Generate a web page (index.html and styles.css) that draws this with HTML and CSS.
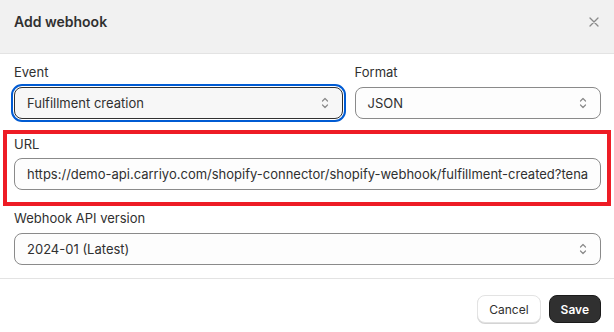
FILE: index.html
```html
<!DOCTYPE html>
<html lang="en">
<head>
    <meta charset="UTF-8">
    <meta name="viewport" content="width=device-width, initial-scale=1.0">
    <title>Add webhook</title>
    <link rel="stylesheet" href="styles.css">
</head>
<body>
    <div class="modal">
        <div class="modal-header">
            <span class="modal-title">Add webhook</span>
            <button class="close-button" aria-label="Close">
                <svg width="10" height="10" viewBox="0 0 10 10"><path d="M1 1L9 9M9 1L1 9" stroke="#8a8a8a" stroke-width="1.3" stroke-linecap="round"/></svg>
            </button>
        </div>

        <div class="modal-body">
            <div class="field-row">
                <div class="field event">
                    <label class="field-label">Event</label>
                    <div class="select focused">
                        <span>Fulfillment creation</span>
                        <svg class="chevron" width="10" height="14" viewBox="0 0 10 14"><path d="M2.5 5L5 2.5L7.5 5M2.5 9L5 11.5L7.5 9" fill="none" stroke="#8a8a8a" stroke-width="1.2" stroke-linecap="round" stroke-linejoin="round"/></svg>
                    </div>
                </div>
                <div class="field format">
                    <label class="field-label">Format</label>
                    <div class="select">
                        <span>JSON</span>
                        <svg class="chevron" width="10" height="14" viewBox="0 0 10 14"><path d="M2.5 5L5 2.5L7.5 5M2.5 9L5 11.5L7.5 9" fill="none" stroke="#8a8a8a" stroke-width="1.2" stroke-linecap="round" stroke-linejoin="round"/></svg>
                    </div>
                </div>
            </div>

            <div class="field highlight">
                <label class="field-label">URL</label>
                <input class="text-input" type="text" value="https://demo-api.carriyo.com/shopify-connector/shopify-webhook/fulfillment-created?tenant=demo">
            </div>

            <div class="field">
                <label class="field-label">Webhook API version</label>
                <div class="select">
                    <span>2024-01 (Latest)</span>
                    <svg class="chevron" width="10" height="14" viewBox="0 0 10 14"><path d="M2.5 5L5 2.5L7.5 5M2.5 9L5 11.5L7.5 9" fill="none" stroke="#8a8a8a" stroke-width="1.2" stroke-linecap="round" stroke-linejoin="round"/></svg>
                </div>
            </div>
        </div>

        <div class="modal-footer">
            <button class="btn btn-secondary">Cancel</button>
            <button class="btn btn-primary">Save</button>
        </div>
    </div>
</body>
</html>
```

FILE: styles.css
```css
body {
    margin: 0;
    padding: 0;
    background-color: #ffffff;
    font-family: 'Inter', 'Liberation Sans', sans-serif;
    font-size: 13px;
    color: #303030;
}

.modal {
    width: 614px;
    height: 332px;
    display: flex;
    flex-direction: column;
    overflow: hidden;
}

.modal-header {
    height: 41px;
    display: flex;
    align-items: flex-start;
    justify-content: space-between;
    padding: 12px 14px 0 14px;
    background-color: #f1f1f1;
    border-bottom: 1px solid #e3e3e3;
}

.modal-title {
    font-size: 14px;
    line-height: 20px;
    font-weight: 600;
    color: #303030;
}

.close-button {
    border: none;
    background: none;
    padding: 0;
    width: 20px;
    height: 20px;
    display: flex;
    align-items: center;
    justify-content: center;
    margin-right: -4px;
}

.modal-body {
    padding: 10px 13px 0 14px;
    display: flex;
    flex-direction: column;
}

.field-row {
    display: flex;
    gap: 12px;
    margin-bottom: 11px;
}

.field {
    display: flex;
    flex-direction: column;
}

.field.event {
    flex: 4;
}

.field.format {
    flex: 3;
}

.field-label {
    line-height: 16px;
    margin-bottom: 7px;
    color: #303030;
}

.select {
    height: 32px;
    box-sizing: border-box;
    border: 1px solid #8a8a8a;
    border-radius: 8px;
    background-color: #fdfdfd;
    display: flex;
    align-items: center;
    justify-content: space-between;
    padding: 0 12px;
    color: #303030;
}

.select.focused {
    background-color: #f7f7f7;
    border-color: #303030;
    outline: 2px solid #005bd3;
    outline-offset: 1px;
}

.chevron {
    flex-shrink: 0;
}

.text-input {
    height: 32px;
    box-sizing: border-box;
    border: 1px solid #8a8a8a;
    border-radius: 8px;
    background-color: #fdfdfd;
    padding: 0 12px;
    font-family: inherit;
    font-size: 13px;
    color: #303030;
}

.highlight {
    border: 4px solid #ee1c25;
    margin: 0 -10px 4px -11px;
    padding: 2px 6px 12px 7px;
}

.highlight .field-label {
    margin-bottom: 6px;
}

.modal-footer {
    margin-top: auto;
    border-top: 1px solid #e3e3e3;
    display: flex;
    justify-content: flex-end;
    gap: 8px;
    padding: 16px 13px 9px 14px;
}

.btn {
    height: 28px;
    border-radius: 8px;
    font-family: inherit;
    font-size: 12px;
    padding: 0 11px;
    cursor: pointer;
}

.btn-secondary {
    background-color: #ffffff;
    border: 1px solid #e3e3e3;
    box-shadow: 0 1px 0 #d4d4d4;
    color: #303030;
}

.btn-primary {
    background-color: #303030;
    border: 1px solid #1a1a1a;
    color: #ffffff;
    font-weight: 600;
}
```
